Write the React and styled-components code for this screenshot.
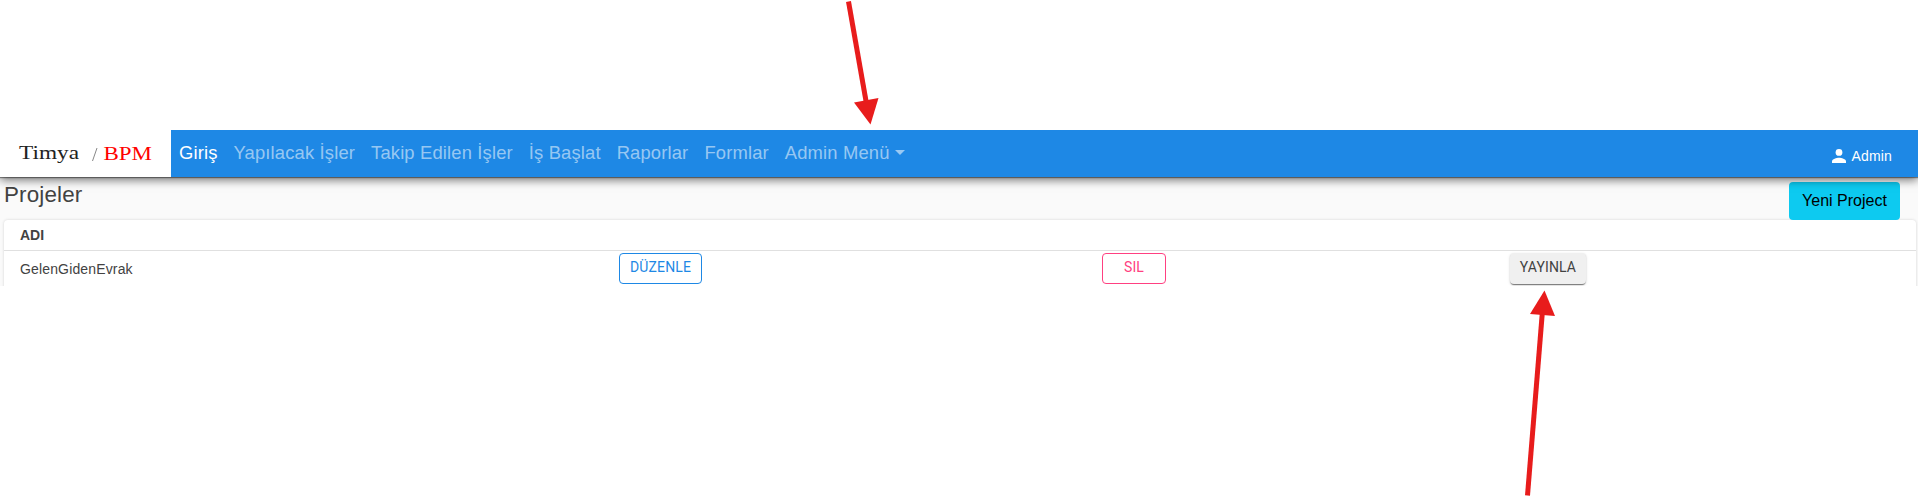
import React from "react";
import styled, { createGlobalStyle } from "styled-components";

const GlobalStyle = createGlobalStyle`
  *, *::before, *::after { box-sizing: border-box; }
  body {
    margin: 0;
    background: #fff;
    color: #424242;
    font-family: "Liberation Sans", Arial, sans-serif;
    overflow: hidden;
  }
`;

const Page = styled.div`
  position: relative;
  height: 496px;
  padding-top: 130px;
  overflow: hidden;
`;

const NavBar = styled.header`
  position: relative;
  z-index: 1;
  display: flex;
  height: 47px;
  background: #1e88e5;
  box-shadow: 0 1px 1px rgba(0, 0, 0, 0.4), 0 3px 9px rgba(0, 0, 0, 0.55);
  clip-path: inset(0 0 -20px 0);
`;

const Brand = styled.div`
  width: 171px;
  background: #fff;
  svg { display: block; }
`;

const NavLinks = styled.nav`
  display: flex;
  flex: 1;
`;

const NavLink = styled.a`
  display: flex;
  align-items: center;
  padding: 0 8px;
  height: 45px;
  font-size: 18.4px;
  letter-spacing: 0.15px;
  white-space: nowrap;
  color: ${(p) => (p.$active ? "#fff" : "rgba(255, 255, 255, 0.55)")};
`;

const Caret = styled.span`
  margin: 0 0 1px 5px;
  border: 5px solid transparent;
  border-top-color: currentColor;
  border-bottom: 0;
`;

const User = styled.div`
  display: flex;
  align-items: center;
  gap: 6px;
  height: 47px;
  padding: 5px 26px 0 0;
  color: #fff;
  font-size: 14px;
  letter-spacing: 0.15px;
`;

const Content = styled.main`
  height: 109px;
  padding: 5px 2px 0 4px;
  background: #fafafa;
  overflow: hidden;
`;

const TitleRow = styled.div`
  display: flex;
  justify-content: space-between;
  height: 38px;
  padding-right: 16px;
`;

const Title = styled.h1`
  margin: 0;
  font-size: 22.4px;
  font-weight: 400;
  line-height: 25px;
  letter-spacing: 0.15px;
`;

const NewButton = styled.button`
  width: 111px;
  height: 38px;
  padding: 0 0 1px;
  border: 0;
  border-radius: 4px;
  background: #0dcaf0;
  color: #000;
  font: 16px "Liberation Sans", Arial, sans-serif;
  white-space: nowrap;
`;

const Card = styled.section`
  height: 90px;
  background: #fff;
  border-radius: 4px;
  box-shadow: 0 0 3px rgba(0, 0, 0, 0.16);
`;

const HeadRow = styled.div`
  display: flex;
  align-items: center;
  height: 31px;
  padding-left: 16px;
  border-bottom: 1px solid #e0e0e0;
  font-size: 14px;
  font-weight: 700;
`;

const Row = styled.div`
  display: grid;
  grid-template-columns: 615px 483px 408px 1fr;
  padding-top: 2px;
`;

const Name = styled.div`
  padding-left: 16px;
  font-size: 14px;
  line-height: 32px;
  letter-spacing: 0.15px;
`;

const tones = {
  primary: "border: 1px solid #1e88e5; color: #1e88e5;",
  danger: "border: 1px solid #ff4081; color: #ff4081;",
  plain:
    "border: 0; background: #f0f0f0; color: #424242; box-shadow: 0 2px 1px -1px rgba(0,0,0,.35), 0 1px 1px rgba(0,0,0,.2), 0 1px 3px rgba(0,0,0,.15);",
};

const Action = styled.button`
  width: ${(p) => p.$width}px;
  height: 31px;
  padding: 0 0 3px;
  border-radius: 4px;
  background: #fff;
  font: 14px Roboto, "Liberation Sans", sans-serif;
  letter-spacing: 0.15px;
  ${(p) => tones[p.$tone]}
`;

const Arrows = styled.svg`
  position: absolute;
  inset: 0;
  z-index: 2;
  pointer-events: none;
`;

const links = ["Yapılacak İşler", "Takip Edilen İşler", "İş Başlat", "Raporlar", "Formlar"];

export default function App() {
  return (
    <Page>
      <GlobalStyle />
      <NavBar>
        <Brand>
          <svg width="171" height="47" fontFamily="'Liberation Serif', serif">
            <text x="19" y="29" fontSize="18.5" textLength="60" lengthAdjust="spacingAndGlyphs" fill="#222">Timya</text>
            <path d="M92.5 31 97 18" stroke="#888" strokeWidth="1" />
            <text x="103.5" y="30" fontSize="18.5" textLength="48.5" lengthAdjust="spacingAndGlyphs" fill="#f00">BPM</text>
          </svg>
        </Brand>
        <NavLinks>
          <NavLink $active>Giriş</NavLink>
          {links.map((label) => <NavLink key={label}>{label}</NavLink>)}
          <NavLink>Admin Menü<Caret /></NavLink>
        </NavLinks>
        <User>
          <svg width="14" height="14" viewBox="0 0 14 14" fill="#fff">
            <circle cx="7" cy="3.4" r="3.4" />
            <path d="M0 14v-1.7C0 10 4.6 8.7 7 8.7s7 1.3 7 3.6V14z" />
          </svg>
          <span>Admin</span>
        </User>
      </NavBar>
      <Content>
        <TitleRow>
          <Title>Projeler</Title>
          <NewButton>Yeni Project</NewButton>
        </TitleRow>
        <Card>
          <HeadRow>ADI</HeadRow>
          <Row>
            <Name>GelenGidenEvrak</Name>
            <div><Action $tone="primary" $width={83}>DÜZENLE</Action></div>
            <div><Action $tone="danger" $width={64}>SIL</Action></div>
            <div><Action $tone="plain" $width={76}>YAYINLA</Action></div>
          </Row>
        </Card>
      </Content>
      <Arrows width="1918" height="496" fill="#e81c1c" stroke="#e81c1c">
        <path d="M848.5 1.5 866 101" strokeWidth="5" />
        <path d="M854 102.5 878.5 98 870.5 124.5z" stroke="none" />
        <path d="M1527.5 495.5 1542.3 313" strokeWidth="5" />
        <path d="M1530 314 1555 316 1544.5 290.5z" stroke="none" />
      </Arrows>
    </Page>
  );
}
